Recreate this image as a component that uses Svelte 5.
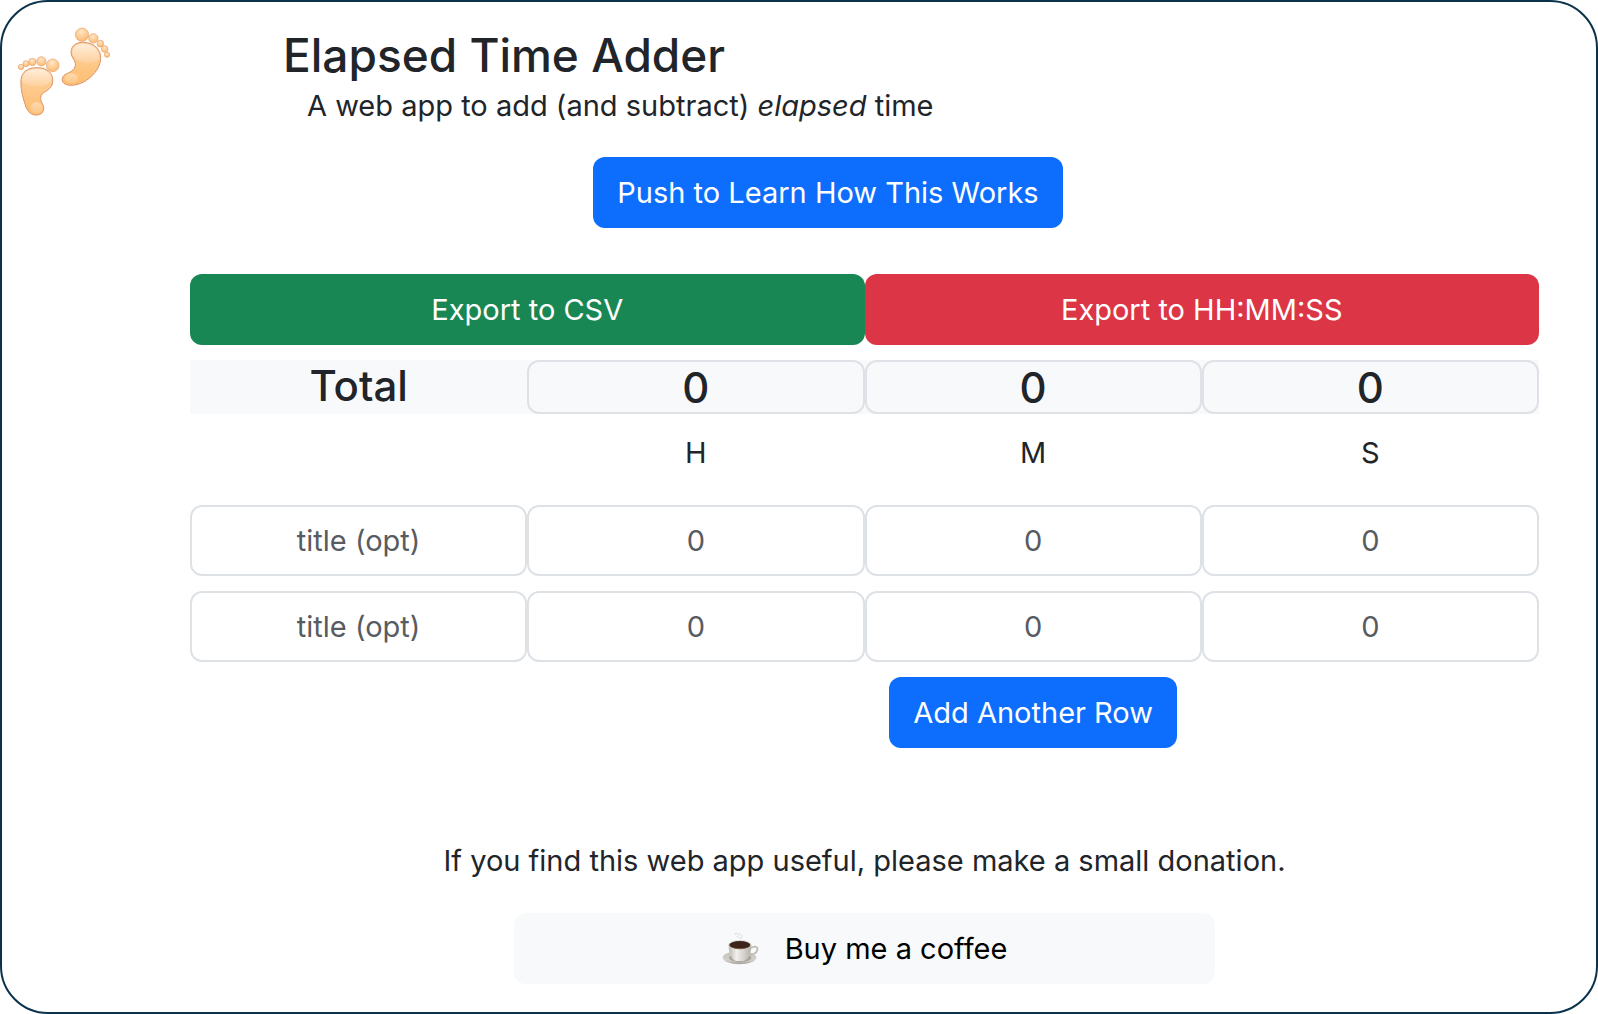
<script>
  let nextId = 3;
  let rows = $state([
    { id: 1, title: '', h: '', m: '', s: '' },
    { id: 2, title: '', h: '', m: '', s: '' }
  ]);
  let helpOpen = $state(false);

  const units = [
    { key: 'h', label: 'H', name: 'hours' },
    { key: 'm', label: 'M', name: 'minutes' },
    { key: 's', label: 'S', name: 'seconds' }
  ];

  let seconds = $derived(
    rows.reduce((sum, r) => sum + (Number(r.h) || 0) * 3600 + (Number(r.m) || 0) * 60 + (Number(r.s) || 0), 0)
  );
  let totals = $derived({
    h: Math.trunc(seconds / 3600),
    m: Math.trunc((seconds % 3600) / 60),
    s: seconds % 60
  });

  function addRow() {
    rows.push({ id: nextId++, title: '', h: '', m: '', s: '' });
  }

  function save(text, name) {
    const link = document.createElement('a');
    link.href = URL.createObjectURL(new Blob([text], { type: 'text/plain' }));
    link.download = name;
    link.click();
  }

  function exportCsv() {
    save(rows.map((r) => [r.title, r.h || 0, r.m || 0, r.s || 0].join(',')).join('\n'), 'times.csv');
  }

  function exportHms() {
    save([totals.h, totals.m, totals.s].map((n) => String(n).padStart(2, '0')).join(':'), 'total.txt');
  }
</script>

<div class="page">
  <header>
    <svg class="logo" viewBox="54 77 276 270" aria-hidden="true">
      <defs>
        <linearGradient id="skin" x1="0" y1="0" x2="0" y2="1">
          <stop offset="0" stop-color="#fed3a0" />
          <stop offset="1" stop-color="#fdbd70" />
        </linearGradient>
        <linearGradient id="shine" x1="0" y1="0" x2="0" y2="1">
          <stop offset="0" stop-color="#ffeedb" />
          <stop offset="1" stop-color="#fdcf9c" />
        </linearGradient>
        <radialGradient id="toe" cx="0.45" cy="0.3" r="0.7">
          <stop offset="0" stop-color="#ffe6c8" />
          <stop offset="1" stop-color="#fcb96e" />
        </radialGradient>
      </defs>
      <g fill="url(#skin)" stroke="#dc946b" stroke-width="3">
        <path d="M63 238C65 214 84 202 112 202C142 202 160 219 158 244C156 264 143 269 131 277C116 288 123 302 129 314C135 329 128 342 113 344C94 346 82 334 76 314C68 290 61 265 63 238Z" />
        <path d="M213 154C215 134 231 125 251 126C282 127 304 147 302 177C300 203 277 232 249 246C231 255 204 259 192 249C182 240 186 226 200 220C216 214 228 204 226 189C224 176 212 170 213 154Z" />
      </g>
      <g fill="url(#shine)">
        <path d="M67 235C70 215 87 206 112 206C139 206 156 221 154 238C151 252 131 259 110 259C86 259 66 251 67 235Z" />
        <path d="M217 153C219 138 233 130 251 130C279 131 299 149 298 173C295 185 278 190 258 188C235 186 216 171 217 153Z" />
        <ellipse cx="110" cy="322" rx="18" ry="17" opacity="0.5" />
        <ellipse cx="214" cy="234" rx="20" ry="15" opacity="0.5" />
      </g>
      <g fill="url(#toe)" stroke="#e5a374" stroke-width="2">
        <circle cx="63" cy="200" r="8" />
        <circle cx="78" cy="190" r="9" />
        <circle cx="97" cy="185" r="11" />
        <circle cx="124" cy="183" r="14" />
        <circle cx="158" cy="195" r="19" />
        <circle cx="321" cy="163" r="8" />
        <circle cx="314" cy="146" r="10" />
        <circle cx="301" cy="130" r="10" />
        <circle cx="280" cy="114" r="14" />
        <circle cx="246" cy="103" r="20" />
      </g>
    </svg>
    <div class="titles">
      <h1>Elapsed Time Adder</h1>
      <p>A web app to add (and subtract) <em>elapsed</em> time</p>
    </div>
  </header>

  <main>
    <div class="learn">
      <button class="btn blue" type="button" aria-expanded={helpOpen} onclick={() => (helpOpen = !helpOpen)}>
        Push to Learn How This Works
      </button>
      {#if helpOpen}
        <p>Type hours, minutes and seconds in each row. Use negative numbers to subtract.</p>
      {/if}
    </div>

    <div class="adder">
      <div class="exports">
        <button class="btn green" type="button" onclick={exportCsv}>Export to CSV</button>
        <button class="btn red" type="button" onclick={exportHms}>Export to HH:MM:SS</button>
      </div>

      <div class="row total">
        <h2>Total</h2>
        {#each units as unit}
          <input type="text" readonly aria-label="Total {unit.name}" value={totals[unit.key]} />
        {/each}
      </div>

      <div class="row heads">
        <span></span>
        {#each units as unit}
          <span>{unit.label}</span>
        {/each}
      </div>

      {#each rows as row (row.id)}
        <div class="row entry">
          <input type="text" placeholder="title (opt)" aria-label="Title" bind:value={row.title} />
          {#each units as unit}
            <input type="text" inputmode="numeric" placeholder="0" aria-label={unit.name} bind:value={row[unit.key]} />
          {/each}
        </div>
      {/each}

      <div class="row">
        <button class="btn blue add" type="button" onclick={addRow}>Add Another Row</button>
      </div>
    </div>

    <footer>
      <p>If you find this web app useful, please make a small donation.</p>
      <a class="btn coffee" href="#donate">
        <svg class="cup" viewBox="0 0 112 102" aria-hidden="true">
          <defs>
            <linearGradient id="china" x1="0" y1="0" x2="1" y2="0">
              <stop offset="0" stop-color="#bbb7b0" />
              <stop offset="0.35" stop-color="#f2f0ec" />
              <stop offset="1" stop-color="#b5b0a8" />
            </linearGradient>
            <linearGradient id="saucer" x1="0" y1="0" x2="0" y2="1">
              <stop offset="0" stop-color="#c4c1bb" />
              <stop offset="0.7" stop-color="#d4d1cb" />
              <stop offset="1" stop-color="#a39f98" />
            </linearGradient>
          </defs>
          <path d="M42 8C36 3 45 0 48 6S56 8 55 2M44 13C48 11 50 17 55 19S61 13 60 9" fill="none" stroke="#d8d9dc" stroke-width="3" />
          <ellipse cx="53" cy="77" rx="51" ry="20" fill="url(#saucer)" />
          <ellipse cx="55" cy="78" rx="34" ry="12" fill="#a9a59e" />
          <path d="M88 48C98 40 110 45 107 54C105 65 91 69 81 68" fill="none" stroke="#bebab4" stroke-width="5" />
          <path d="M20 38C20 63 29 85 43 87H65C80 85 89 61 89 38Z" fill="url(#china)" />
          <ellipse cx="54" cy="38" rx="35" ry="14" fill="#dcd9d3" />
          <ellipse cx="54" cy="39" rx="32" ry="12" fill="#3d241b" />
          <path d="M26 44C39 54 70 54 83 44C71 49 39 49 26 44Z" fill="#795340" />
        </svg>
        <span>Buy me a coffee</span>
      </a>
    </footer>
  </main>
</div>

<style>
  :global(body) {
    background: #fff;
  }

  .page,
  .page * {
    box-sizing: border-box;
  }

  .page {
    min-height: 100vh;
    padding: 24px 57px 28px 16px;
    border: 2px solid #0a324a;
    border-radius: 48px;
    background: #fff;
    color: #212529;
    font-family: Inter, 'Liberation Sans', sans-serif;
    font-size: 29px;
    line-height: 44px;
  }

  h1,
  h2,
  p {
    margin: 0;
  }

  header {
    display: flex;
    align-items: flex-start;
    gap: 173px;
  }

  .logo {
    flex: none;
    width: 92px;
    height: 90px;
  }

  h1 {
    font-size: 46px;
    font-weight: 500;
    line-height: 58px;
  }

  .titles p {
    padding-left: 24px;
  }

  main {
    padding-left: 99px;
  }

  .learn {
    padding: 29px 0 46px;
    text-align: center;
  }

  .btn {
    height: 71px;
    padding: 0 24px;
    border: 0;
    border-radius: 12px;
    color: #fff;
    font: inherit;
    cursor: pointer;
  }

  .blue {
    background: #0d6efd;
  }

  .green {
    background: #198754;
  }

  .red {
    background: #dc3545;
  }

  .adder,
  footer {
    margin-left: 73px;
  }

  .adder {
    display: flex;
    flex-direction: column;
    gap: 15px;
  }

  .exports {
    display: grid;
    grid-template-columns: 1fr 1fr;
  }

  .row {
    display: grid;
    grid-template-columns: repeat(4, 1fr);
    text-align: center;
  }

  input {
    min-width: 0;
    width: 100%;
    height: 71px;
    padding: 0 24px;
    border: 2px solid #dee2e6;
    border-radius: 12px;
    background: #fff;
    color: inherit;
    font: inherit;
    text-align: center;
  }

  input::placeholder {
    color: #585b5f;
    opacity: 1;
  }

  .total {
    background: #f8f9fa;
  }

  .total input {
    height: 54px;
    background: #f8f9fa;
  }

  .total h2,
  .total input {
    font-size: 42px;
    font-weight: 500;
    line-height: 52px;
  }

  .heads {
    padding: 2px 0 15px;
  }

  .add {
    grid-column: 3;
    justify-self: center;
    white-space: nowrap;
  }

  footer {
    display: flex;
    flex-direction: column;
    align-items: center;
    gap: 30px;
    padding-top: 91px;
    text-align: center;
  }

  .coffee {
    display: flex;
    align-items: center;
    justify-content: center;
    gap: 26px;
    width: 52%;
    background: #f8f9fa;
    color: #000;
    text-decoration: none;
  }

  .cup {
    width: 37px;
    height: 34px;
  }
</style>
